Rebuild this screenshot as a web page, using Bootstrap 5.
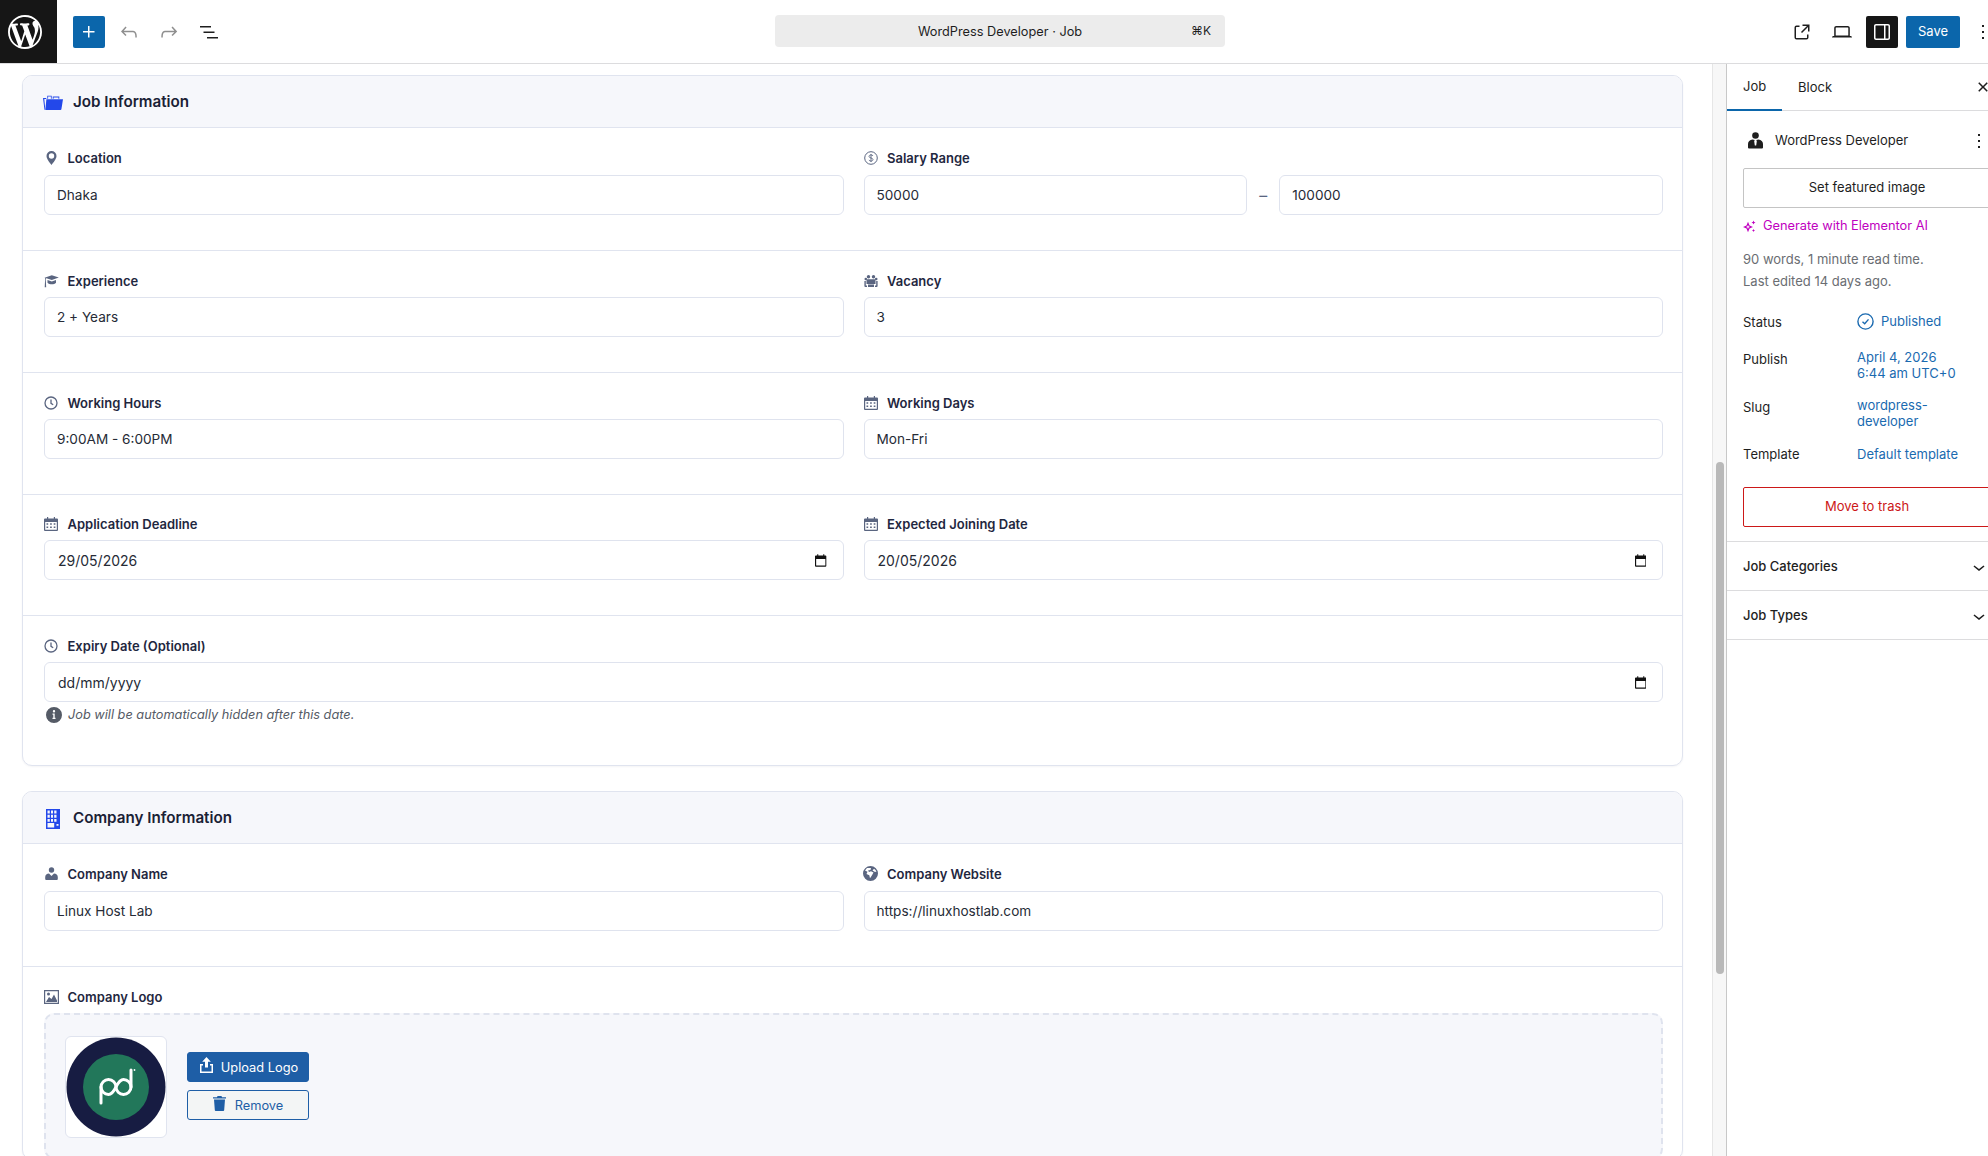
<!DOCTYPE html>
<html lang="en">
<head>
<meta charset="utf-8">
<title>WordPress Developer - Job</title>
<link href="https://cdn.jsdelivr.net/npm/bootstrap@5.3.0/dist/css/bootstrap.min.css" rel="stylesheet">
<style>
html,body{height:100%;overflow:hidden;background:#fff;font-family:Inter,"Liberation Sans",sans-serif;font-size:13px;color:#1e1e1e}
svg{display:block;flex:none}
.wp-top{height:64px;border-bottom:1px solid #dcdcde;background:#fff;flex-wrap:nowrap}
.wp-logo{width:57px;height:63px;background:#161616;color:#fff;padding-left:8px}
.wp-add{width:32px;height:32px;background:#0b66ab;color:#fff;border-radius:2px;margin-left:16px}
.toolzone{height:63px}
.ibtn{width:32px;height:32px;padding:0;border:0;background:none;color:#1e1e1e;border-radius:2px}
.ibtn.dim{color:#8f8f8f}
.ibtn.on{background:#161616;color:#fff}
.tools{margin-left:8px;gap:8px}
.cmd{position:absolute;left:775px;width:450px;height:32px;background:#ececec;border-radius:4px;font-size:12.75px;top:15px;padding-top:1px}
.cmd-k{position:absolute;right:4px;top:8px;font-size:12px;line-height:16px;width:30px}
.right-tools{margin-left:auto;width:230px;flex:none;margin-right:-28px;gap:8px}
.wp-save{background:#0b66ab;color:#fff;border:0;width:54px;height:32px;font-size:13px;border-radius:2px;padding:0}
.opt-last{margin-left:-1px}
.mid{height:calc(100vh - 64px);flex-wrap:nowrap}
.canvas{width:1712px;flex:none;padding:11px 29px 0 22px;overflow:hidden}
.sbar{width:14px;flex:none;background:#f7f7f7;border-left:1px solid #e6e6e6;padding-top:398px;padding-left:3px}
.sthumb{width:8px;height:512px;background:#b9b9b9;border-radius:4px}
.side{width:281px;flex:none;border-left:1px solid #c8c8c8;font-size:13px}
.fcard{border:1px solid #e0e4ef;border-radius:10px;box-shadow:0 1px 2px rgba(30,40,80,.05);margin-bottom:25px;overflow:hidden;--bs-card-bg:#fff}
.fhead{height:52px;background:#f6f7fb;border-bottom:1px solid #e0e4ef;padding:2px 20px 0;gap:11px;font-size:15.2px;font-weight:600;color:#1a2135}
.fhead .hico{width:19px}
.fsec{padding:18px 21px 35px;border-bottom:1px solid #e0e4ef}
.fsec.one{padding-top:19px}
.fsec.one .flab{margin:.5px 0 7.5px}
.fsec.tight{padding-top:17px}
.fsec.last{border-bottom:0;padding-bottom:0;padding-right:19px}
.fsec.hintrow{padding-bottom:42px}
.fsec.logosec{padding-top:20px}
.frow{--bs-gutter-x:20px;margin-left:-10px;margin-right:-12px}
.flab{height:20px;margin:2px 0 6px;gap:9.5px;font-size:13px;font-weight:600;color:#1f2740;line-height:20px}
.flab.logolab{margin:0 0 6px}
.flab .lico{width:14px;color:#5a6580;justify-content:center}
.finp{height:40px;border:1px solid #dfe3ee;border-radius:6px;padding:0 12px;font-size:13.6px;color:#262b36;box-shadow:none}
.dwrap{padding:0 16px 0 13px;gap:8px;font-size:14px}
.dwrap input{border:0;outline:0;padding:0;background:none;flex:1;min-width:0;font:inherit;color:inherit}
.dash{width:32px;flex:none;text-align:center;color:#5a6580;font-size:16px}
.hint{margin-top:5px;gap:6px;font-size:12.75px;font-style:italic;color:#555b66;height:16px;line-height:16px;padding-left:2px}
.drop{border:2px dashed #dfe3ee;border-radius:10px;background:#f6f7fb;padding:20px 20px 19px 19px;gap:20px;height:146px}
.prev{width:102px;height:102px;background:#fff;border:1px solid #e0e4ef;border-radius:6px}
.bstack{gap:8px;margin-top:-1px}
.bup,.brm{width:122px;height:30px;padding:2px 0 0;border-radius:3px;font-size:12.8px;border:1px solid #1e5ea6;line-height:1}
.bup{background:#1e5ea6;color:#fff;gap:8px;padding-left:2px}
.brm{background:#f3f5f5;color:#1e5ea6;gap:9px}
.bup svg,.brm svg{margin-top:-6px}
.tabs-side{height:47px;border-bottom:1px solid #dcdcde;flex-wrap:nowrap}
.stab{padding:0 16px;height:46px;color:#1e1e1e;font-size:13px;line-height:1;border:0;background:none;border-radius:0}
.stab.on{border-bottom:2px solid #0b66ab;height:47px;width:55px;padding:1px 0 0 16px}
.closer{margin-right:8px}
.spad{padding:0 16px}
.postrow{height:57px;padding-top:2px}
.posticon{width:26px;margin-right:7px;margin-left:-1px}
.optpost{margin-right:-4px}
.plain{width:248px;height:40px;border:1px solid #c4c4c4;border-radius:2px;background:#fff;font-size:13px;color:#1e1e1e;padding:0}
.danger{border-color:#cc1818;color:#cc1818;margin-top:24.500px}
.genai{color:#c000c0;gap:7px;margin-top:10px;height:16px;font-size:12.8px}
.meta{color:#6a6d72;line-height:22px;margin-top:13.500px}
.mrow{flex-wrap:nowrap}
.mstatus{margin-top:19px;height:22px}
.mpub{margin-top:16px}
.mslug{margin-top:16px}
.mtpl{margin-top:17.500px;height:16px}
.mlab{width:114px;flex:none;line-height:20px}
.mval{width:112px;color:#1a6ab0;line-height:16px}
.mwide{width:120px}
.mpublished{gap:7px;color:#1a6ab0}
.acc{height:49px;border-top:1px solid #dcdcde;padding:2px 16px 0;width:280px;font-weight:500;color:#1e1e1e;flex-wrap:nowrap}
.acc.first{margin-top:14.500px}
.hr-end{border-top:1px solid #dcdcde}
</style>
</head>
<body>
<header class="navbar wp-top p-0 d-flex align-items-start position-relative">
  <a class="wp-logo d-flex align-items-center" href="#" aria-label="WordPress">
    <svg width="34" height="34" viewBox="0 0 20 20" fill="currentColor"><path d="M20 10c0-5.51-4.49-10-10-10C4.48 0 0 4.49 0 10c0 5.52 4.48 10 10 10 5.51 0 10-4.48 10-10zM7.78 15.37L4.37 6.22c.55-.02 1.17-.08 1.17-.08.5-.06.44-1.13-.06-1.11 0 0-1.45.11-2.37.11-.18 0-.37 0-.58-.01C4.12 2.69 6.87 1.11 10 1.11c2.33 0 4.45.87 6.05 2.34-.68-.11-1.65.39-1.65 1.58 0 .74.45 1.36.9 2.1.35.61.55 1.36.55 2.46 0 1.49-1.4 5-1.4 5l-3.03-8.37c.54-.02.82-.17.82-.17.5-.05.44-1.25-.06-1.22 0 0-1.44.12-2.38.12-.87 0-2.33-.12-2.33-.12-.5-.03-.56 1.2-.06 1.22l.92.08 1.26 3.41zM17.41 10c.24-.64.74-1.87.43-4.25.7 1.29 1.05 2.71 1.05 4.25 0 3.29-1.73 6.24-4.4 7.78.97-2.59 1.94-5.2 2.92-7.78zM6.1 18.09C3.12 16.65 1.11 13.53 1.11 10c0-1.3.23-2.48.72-3.59C3.25 10.3 4.67 14.2 6.1 18.09zm4.03-6.63l2.58 6.98c-.86.29-1.76.45-2.71.45-.79 0-1.57-.11-2.29-.33.81-2.38 1.62-4.74 2.42-7.1z"/></svg>
  </a>
  <div class="d-flex align-items-center toolzone">
    <button class="btn wp-add p-0 d-flex align-items-center justify-content-center" aria-label="Add"><svg width="24" height="24" viewBox="0 0 24 24" fill="currentColor"><path d="M11 12.5V17.5H12.5V12.5H17.5V11H12.5V6H11V11H6V12.5H11Z"/></svg></button>
    <div class="d-flex tools">
      <button class="btn ibtn dim d-flex align-items-center justify-content-center" aria-label="Undo"><svg width="24" height="24" viewBox="0 0 24 24" fill="currentColor"><path d="M18.3 11.7c-.6-.6-1.4-.9-2.3-.9H6.7l2.9-3.3-1.1-1-4.5 5L8.5 16l1-1-2.7-2.7H16c.5 0 .9.2 1.3.5 1 1 1 3.4 1 4.5v.3h1.5v-.2c0-1.5 0-4.3-1.5-5.7z"/></svg></button>
      <button class="btn ibtn dim d-flex align-items-center justify-content-center" aria-label="Redo"><svg width="24" height="24" viewBox="0 0 24 24" fill="currentColor"><path d="M15.6 6.5l-1.1 1 2.9 3.3H8c-.9 0-1.7.3-2.3.9-1.4 1.5-1.4 4.2-1.4 5.6v.2h1.5v-.3c0-1.1 0-3.5 1-4.5.3-.3.7-.5 1.3-.5h9.2L14.5 15l1.1 1.1 4.6-4.6-4.6-5z"/></svg></button>
      <button class="btn ibtn d-flex align-items-center justify-content-center" aria-label="List view"><svg width="24" height="24" viewBox="0 0 24 24" fill="currentColor"><path d="M3 6h11v1.5H3V6zm3.5 5.5h11V13h-11v-1.5zM21 17H10v1.5h11V17z"/></svg></button>
    </div>
  </div>
  <div class="cmd d-flex align-items-center justify-content-center">WordPress Developer · Job<span class="cmd-k">⌘K</span></div>
  <div class="right-tools toolzone d-flex align-items-center justify-content-start">
    <button class="btn ibtn d-flex align-items-center justify-content-center" aria-label="View post"><svg width="24" height="24" viewBox="0 0 24 24" fill="currentColor"><path d="M19.5 4.5h-7V6h4.44l-5.97 5.97 1.06 1.06L18 7.06v4.44h1.5v-7Zm-13 1a2 2 0 0 0-2 2v10a2 2 0 0 0 2 2h10a2 2 0 0 0 2-2v-3H17v3a.5.5 0 0 1-.5.5h-10a.5.5 0 0 1-.5-.5v-10a.5.5 0 0 1 .5-.5h3V5.5h-3Z"/></svg></button>
    <button class="btn ibtn d-flex align-items-center justify-content-center" aria-label="Desktop"><svg width="24" height="24" viewBox="0 0 24 24" fill="currentColor"><path d="M20.5 16h-.7V8c0-1.1-.9-2-2-2H6.2c-1.1 0-2 .9-2 2v8h-.7c-.8 0-1.5.7-1.5 1.5h20c0-.8-.7-1.5-1.5-1.5zM5.7 8c0-.3.2-.5.5-.5h11.6c.3 0 .5.2.5.5v7.6H5.7V8z"/></svg></button>
    <button class="btn ibtn on d-flex align-items-center justify-content-center" aria-label="Settings"><svg width="24" height="24" viewBox="0 0 24 24" fill="currentColor"><path d="M18 4H6c-1.1 0-2 .9-2 2v12c0 1.1.9 2 2 2h12c1.1 0 2-.9 2-2V6c0-1.1-.9-2-2-2zm-4 14.5H6c-.3 0-.5-.2-.5-.5V6c0-.3.2-.5.5-.5h8v13zm4.5-.5c0 .3-.2.5-.5.5h-2.5v-13H18c.3 0 .5.2.5.5v12z"/></svg></button>
    <button class="btn wp-save">Save</button>
    <button class="btn ibtn opt-last d-flex align-items-center justify-content-center" aria-label="Options"><svg width="24" height="24" viewBox="0 0 24 24" fill="currentColor"><path d="M13 19h-2v-2h2v2zm0-6h-2v-2h2v2zm0-6h-2V5h2v2z"/></svg></button>
  </div>
</header>

<div class="mid d-flex">
  <main class="canvas">
    <section class="card fcard">
      <div class="card-header fhead d-flex align-items-center">
        <span class="hico d-flex justify-content-center"><svg width="20" height="15" viewBox="0 0 20 14" preserveAspectRatio="none" fill="#2348ea"><path d="M0 2.800h3.300v1H1.300l1 9.400-.8.800z"/><path fill-rule="evenodd" d="M4.300 3.500V.6h4.400v2.900H7.900V1.400H5.100v2.100zM9.700 3.500V1.500h6.600v2h-.9V2.300H10.600v1.200z"/><path d="M3.400 4h16.600l-1.600 9.300c-.1.400-.4.700-.9.700H2.300z"/></svg></span>
        <span>Job Information</span>
      </div>
      <div class="card-body p-0">
        <div class="fsec one">
          <div class="row frow">
            <div class="col-6">
              <label class="form-label flab d-flex align-items-center"><span class="lico d-flex"><svg width="11" height="14" viewBox="0 0 11 14" fill="currentColor"><path fill-rule="evenodd" d="M5.500 0a5 5 0 0 1 5 5c0 3-3.300 6.800-5 9-1.700-2.200-5-6-5-9a5 5 0 0 1 5-5Zm0 2.300a2.700 2.700 0 1 0 0 5.400 2.700 2.700 0 0 0 0-5.400Z"/></svg></span>Location</label>
              <input class="form-control finp" value="Dhaka">
            </div>
            <div class="col-6">
              <label class="form-label flab d-flex align-items-center"><span class="lico d-flex"><svg width="14" height="14" viewBox="0 0 14 14" fill="none" stroke="currentColor"><circle cx="7" cy="7" r="6.300"/><path d="M9 5c-.3-.8-1-1.100-2-1.100S5 4.500 5 5.400c0 2 4 1.200 4 3.200 0 .9-1 1.500-2 1.500s-1.800-.4-2-1.200M7 3v8" stroke-width=".9"/></svg></span>Salary Range</label>
              <div class="d-flex align-items-center">
                <input class="form-control finp" value="50000">
                <span class="dash">–</span>
                <input class="form-control finp" value="100000">
              </div>
            </div>
          </div>
        </div>
        <div class="fsec">
          <div class="row frow">
            <div class="col-6">
              <label class="form-label flab d-flex align-items-center"><span class="lico d-flex"><svg width="15" height="13" viewBox="0 0 15 13" fill="currentColor"><path d="M7.800.2l7 2.400-7 2.500-5.300-1.800-.7.3v1.600l.4 7H.7l.4-7.100V3.200L.6 2.800zM3.500 5l4.300 1.600L12 5v2.800c-1 1-2.500 1.500-4.200 1.500S4.500 8.800 3.500 7.800z"/></svg></span>Experience</label>
              <input class="form-control finp" value="2 + Years">
            </div>
            <div class="col-6">
              <label class="form-label flab d-flex align-items-center"><span class="lico d-flex"><svg width="14" height="12" viewBox="0 0 14 12" fill="currentColor"><circle cx="4.500" cy="1.700" r="1.700"/><circle cx="9.500" cy="1.700" r="1.700"/><circle cx="1.800" cy="4" r="1.300"/><circle cx="12.200" cy="4" r="1.300"/><path d="M3.500 4.200h7a1 1 0 0 1 1 1V9H2.500V5.200a1 1 0 0 1 1-1zM.4 6h1.400v4.500H3V12H1.300A1 1 0 0 1 .4 11zM13.600 6h-1.400v4.500H11V12h1.700a1 1 0 0 0 .9-1zM4 9.600h6V12H4z"/></svg></span>Vacancy</label>
              <input class="form-control finp" value="3">
            </div>
          </div>
        </div>
        <div class="fsec">
          <div class="row frow">
            <div class="col-6">
              <label class="form-label flab d-flex align-items-center"><span class="lico d-flex"><svg width="14" height="14" viewBox="0 0 14 14" fill="none" stroke="currentColor" stroke-width="1.300"><circle cx="7" cy="7" r="6"/><path d="M7 3.500V7.300l2.200 1.500"/></svg></span>Working Hours</label>
              <input class="form-control finp" value="9:00AM - 6:00PM">
            </div>
            <div class="col-6">
              <label class="form-label flab d-flex align-items-center"><span class="lico d-flex"><svg width="14" height="14" viewBox="0 0 14 14" fill="currentColor"><path fill-rule="evenodd" d="M3 0h1.200v1.500h5.600V0H11v1.500h2a1 1 0 0 1 1 1V13a1 1 0 0 1-1 1H1a1 1 0 0 1-1-1V2.500a1 1 0 0 1 1-1h2zM1.200 5v7.800h11.600V5zM2.500 6.200h1.700v1.500H2.500zm3.600 0h1.700v1.500H6.100zm3.600 0h1.700v1.500H9.700zM2.500 9.500h1.700V11H2.500zm3.600 0h1.700V11H6.100zm3.600 0h1.700V11H9.700z"/></svg></span>Working Days</label>
              <input class="form-control finp" value="Mon-Fri">
            </div>
          </div>
        </div>
        <div class="fsec tight">
          <div class="row frow">
            <div class="col-6">
              <label class="form-label flab d-flex align-items-center"><span class="lico d-flex"><svg width="14" height="14" viewBox="0 0 14 14" fill="currentColor"><path fill-rule="evenodd" d="M3 0h1.200v1.500h5.600V0H11v1.500h2a1 1 0 0 1 1 1V13a1 1 0 0 1-1 1H1a1 1 0 0 1-1-1V2.500a1 1 0 0 1 1-1h2zM1.200 5v7.800h11.600V5zM2.500 6.200h1.700v1.500H2.500zm3.600 0h1.700v1.500H6.100zm3.600 0h1.700v1.500H9.700zM2.500 9.500h1.700V11H2.500zm3.600 0h1.700V11H6.100zm3.600 0h1.700V11H9.700z"/></svg></span>Application Deadline</label>
              <div class="form-control finp dwrap d-flex align-items-center"><input value="29/05/2026" aria-label="Application deadline"><svg width="11.500" height="13" viewBox="0 0 13 14" fill="#111"><path fill-rule="evenodd" d="M2.500 0h1.200v1.300h5.600V0h1.200v1.300h1.300a1 1 0 0 1 1 1V13a1 1 0 0 1-1 1H1a1 1 0 0 1-1-1V2.300a1 1 0 0 1 1-1h1.500zM1.300 5.200v7.500h10.400V5.200z"/></svg></div>
            </div>
            <div class="col-6">
              <label class="form-label flab d-flex align-items-center"><span class="lico d-flex"><svg width="14" height="14" viewBox="0 0 14 14" fill="currentColor"><path fill-rule="evenodd" d="M3 0h1.200v1.500h5.600V0H11v1.500h2a1 1 0 0 1 1 1V13a1 1 0 0 1-1 1H1a1 1 0 0 1-1-1V2.500a1 1 0 0 1 1-1h2zM1.200 5v7.800h11.600V5zM2.500 6.200h1.700v1.500H2.500zm3.600 0h1.700v1.500H6.100zm3.600 0h1.700v1.500H9.700zM2.500 9.500h1.700V11H2.500zm3.600 0h1.700V11H6.100zm3.600 0h1.700V11H9.700z"/></svg></span>Expected Joining Date</label>
              <div class="form-control finp dwrap d-flex align-items-center"><input value="20/05/2026" aria-label="Expected joining date"><svg width="11.500" height="13" viewBox="0 0 13 14" fill="#111"><path fill-rule="evenodd" d="M2.500 0h1.200v1.300h5.600V0h1.200v1.300h1.300a1 1 0 0 1 1 1V13a1 1 0 0 1-1 1H1a1 1 0 0 1-1-1V2.300a1 1 0 0 1 1-1h1.500zM1.300 5.200v7.500h10.400V5.200z"/></svg></div>
            </div>
          </div>
        </div>
        <div class="fsec last hintrow">
          <label class="form-label flab d-flex align-items-center"><span class="lico d-flex"><svg width="14" height="14" viewBox="0 0 14 14" fill="none" stroke="currentColor" stroke-width="1.300"><circle cx="7" cy="7" r="6"/><path d="M7 3.500V7.300l2.200 1.500"/></svg></span>Expiry Date (Optional)</label>
          <div class="form-control finp dwrap d-flex align-items-center"><input value="dd/mm/yyyy" aria-label="Expiry date"><svg width="11.500" height="13" viewBox="0 0 13 14" fill="#111"><path fill-rule="evenodd" d="M2.500 0h1.200v1.300h5.600V0h1.200v1.300h1.300a1 1 0 0 1 1 1V13a1 1 0 0 1-1 1H1a1 1 0 0 1-1-1V2.300a1 1 0 0 1 1-1h1.500zM1.300 5.200v7.500h10.400V5.200z"/></svg></div>
          <div class="hint d-flex align-items-center"><svg width="16" height="16" viewBox="0 0 16 16" fill="#555b66"><path fill-rule="evenodd" d="M8 0a8 8 0 1 1 0 16A8 8 0 0 1 8 0ZM8 3a1.200 1.200 0 1 0 0 2.400A1.200 1.200 0 0 0 8 3ZM6.500 6.500v1.200h.8v3.100h-.8V12h3v-1.200h-.8V6.500z"/></svg><span>Job will be automatically hidden after this date.</span></div>
        </div>
      </div>
    </section>

    <section class="card fcard">
      <div class="card-header fhead d-flex align-items-center">
        <span class="hico d-flex justify-content-center"><svg width="14" height="20" viewBox="0 0 14 20" fill="#2348ea"><path fill-rule="evenodd" d="M0 0h14v20H0zM1.500 1.500v3h2.300v-3zm3.500 0v3h2v-3zm3.200 0v3h2.300v-3zM1.500 5.700v3h2.300v-3zm3.500 0v3h2v-3zm3.200 0v3h2.300v-3zM1.500 10v2.800h2.300V10zM5 10v2.800h2V10zm3.200 0v2.800h2.300V10zM1.500 14v4.500h6.700V14zm9 1v1.800h2V15z"/></svg></span>
        <span>Company Information</span>
      </div>
      <div class="card-body p-0">
        <div class="fsec one">
          <div class="row frow">
            <div class="col-6">
              <label class="form-label flab d-flex align-items-center"><span class="lico d-flex"><svg width="13" height="13" viewBox="0 0 13 13" fill="currentColor"><circle cx="6.500" cy="3" r="2.700"/><path d="M4 6.500 6.500 9 9 6.500c2.200.1 3.700 1.500 3.800 3.500v2a1 1 0 0 1-1 1h-10.600a1 1 0 0 1-1-1v-2C.3 8 1.800 6.600 4 6.500Z"/></svg></span>Company Name</label>
              <input class="form-control finp" value="Linux Host Lab">
            </div>
            <div class="col-6">
              <label class="form-label flab d-flex align-items-center"><span class="lico d-flex"><svg width="15" height="15" viewBox="0 0 15 15" fill="currentColor"><path fill-rule="evenodd" d="M7.500 0a7.500 7.500 0 1 1 0 15 7.500 7.500 0 0 1 0-15ZM4 2 2 4.500l2.500 1.300L3.500 8l2.800 1.200.7 3 2-3 1.500-2.700-2.500-1.200L6 6 5 4.500 7.500 4 8 2zm7 .8L9.500 4.500 12 6l1.500-.5A6 6 0 0 0 11 2.800Z"/></svg></span>Company Website</label>
              <input class="form-control finp" value="https://linuxhostlab.com">
            </div>
          </div>
        </div>
        <div class="fsec last logosec">
          <label class="form-label flab logolab d-flex align-items-center"><span class="lico d-flex"><svg width="15" height="14" viewBox="0 0 15 14" fill="currentColor"><path fill-rule="evenodd" d="M0 0h15v14H0zM1.200 1.200v11.600h12.600V1.200zM2 12l3-5 2.500 2L10 4.500l3 6V12zM4.500 2.500a1.500 1.500 0 1 1 0 3 1.500 1.500 0 0 1 0-3Z"/></svg></span>Company Logo</label>
          <div class="drop d-flex align-items-center">
            <div class="prev d-flex align-items-center justify-content-center">
              <svg width="100" height="100" viewBox="0 0 100 100" role="img" aria-label="Company logo"><circle cx="50" cy="50" r="49.500" fill="#171c42"/><circle cx="50" cy="50" r="33" fill="#22775a"/><g fill="none" stroke="#fff" stroke-width="3" stroke-linecap="round"><path d="M35 66V50A7.500 7.500 0 0 1 50 50 7.500 7.500 0 0 0 65 50V33"/><path d="M35 50A7.500 7.500 0 0 0 42.500 57.500C46 57.500 48 54 50 50S54 42.500 57.500 42.500A7.500 7.500 0 0 1 65 50"/></g><circle cx="68.500" cy="33" r=".9" fill="#fff"/></svg>
            </div>
            <div class="d-flex flex-column bstack">
              <button class="btn bup d-flex align-items-center justify-content-center"><svg width="13" height="16" viewBox="0 0 13 16" fill="#fff"><path d="M6.500 0 10.800 4.700H8v5.800H5V4.700H2.200zM0 7h3v1.500H1.500v6h10v-6H10V7h3v9H0z"/></svg>Upload Logo</button>
              <button class="btn brm d-flex align-items-center justify-content-center"><svg width="13" height="15" viewBox="0 0 13 15" fill="#1e5ea6"><path d="M4.500 0h4l.5 1.200h4v1.300H0V1.200h4zM1 3.500h11l-.8 10.400a1 1 0 0 1-1 1.100H2.800a1 1 0 0 1-1-1.100z"/></svg>Remove</button>
            </div>
          </div>
        </div>
      </div>
    </section>
  </main>
  <div class="sbar"><div class="sthumb"></div></div>
  <aside class="side">
    <div class="tabs-side d-flex align-items-center">
      <button class="btn stab on d-flex align-items-center">Job</button>
      <button class="btn stab d-flex align-items-center">Block</button>
      <button class="btn ibtn closer ms-auto d-flex align-items-center justify-content-center" aria-label="Close"><svg width="24" height="24" viewBox="0 0 24 24" fill="currentColor"><path d="M12 13.060l3.712 3.713 1.061-1.060L13.061 12l3.712-3.712-1.060-1.060L12 10.938 8.288 7.227l-1.061 1.060L10.939 12l-3.712 3.712 1.060 1.061L12 13.061z"/></svg></button>
    </div>
    <div class="spad">
      <div class="postrow d-flex align-items-center">
        <span class="posticon d-flex justify-content-center"><svg width="15" height="17" viewBox="0 0 15 17" fill="#1e1e1e"><circle cx="7.500" cy="3.500" r="3.300"/><path d="M4.500 7.500 6.700 8l-.5 1.200.6 4.300h1.400l.6-4.300L8.300 8l2.200-.5c2.700.2 4.500 2 4.500 4.500v3.500a1 1 0 0 1-1 1H1a1 1 0 0 1-1-1V12c0-2.500 1.800-4.300 4.500-4.500Z"/></svg></span>
        <span>WordPress Developer</span>
        <button class="btn ibtn optpost ms-auto d-flex align-items-center justify-content-center" aria-label="Options"><svg width="24" height="24" viewBox="0 0 24 24" fill="currentColor"><path d="M13 19h-2v-2h2v2zm0-6h-2v-2h2v2zm0-6h-2V5h2v2z"/></svg></button>
      </div>
      <button class="btn plain d-block">Set featured image</button>
      <div class="genai d-flex align-items-center"><svg width="13" height="13" viewBox="0 0 13 13" fill="#c000c0"><path fill-rule="evenodd" d="M5 1.800 6.500 5.500 10 7 6.500 8.500 5 12.200 3.500 8.500 0 7l3.500-1.500ZM5 4.900 4.400 6.300 3 7l1.400.6L5 9.100l.6-1.500L7 7l-1.400-.7Z"/><path d="M10.500 .6l.6 1.400 1.400.6-1.400.6-.6 1.400-.6-1.400-1.400-.6 1.400-.6zM10.500 9l.5 1.100 1 .4-1 .5-.5 1-.5-1-1-.5 1-.4z"/></svg>Generate with Elementor AI</div>
      <div class="meta">90 words, 1 minute read time.<br>Last edited 14 days ago.</div>
      <div class="mrow mstatus d-flex align-items-center"><span class="mlab">Status</span><span class="mpublished d-flex align-items-center"><svg width="17" height="17" viewBox="0 0 17 17" fill="none" stroke="#1a6ab0" stroke-width="1.400"><circle cx="8.500" cy="8.500" r="7.600"/><path d="M5.500 8.800l2.200 2 3.800-4.400"/></svg>Published</span></div>
      <div class="mrow mpub d-flex"><span class="mlab">Publish</span><span class="mval mwide">April 4, 2026<br>6:44 am UTC+0</span></div>
      <div class="mrow mslug d-flex"><span class="mlab">Slug</span><span class="mval">wordpress-<br>developer</span></div>
      <div class="mrow mtpl d-flex align-items-center"><span class="mlab">Template</span><span class="mval text-nowrap">Default template</span></div>
      <button class="btn plain danger d-block">Move to trash</button>
    </div>
    <div class="acc first d-flex align-items-center justify-content-between"><span>Job Categories</span><svg width="24" height="24" viewBox="0 0 24 24" fill="#1e1e1e"><path d="M17.500 11.600L12 16l-5.500-4.400.9-1.200L12 14l4.500-3.600 1 1.200z"/></svg></div>
    <div class="acc d-flex align-items-center justify-content-between"><span>Job Types</span><svg width="24" height="24" viewBox="0 0 24 24" fill="#1e1e1e"><path d="M17.500 11.600L12 16l-5.500-4.400.9-1.200L12 14l4.500-3.600 1 1.200z"/></svg></div>
    <div class="hr-end"></div>
  </aside>
</div>
<script src="https://cdn.jsdelivr.net/npm/bootstrap@5.3.0/dist/js/bootstrap.bundle.min.js"></script>
</body>
</html>
